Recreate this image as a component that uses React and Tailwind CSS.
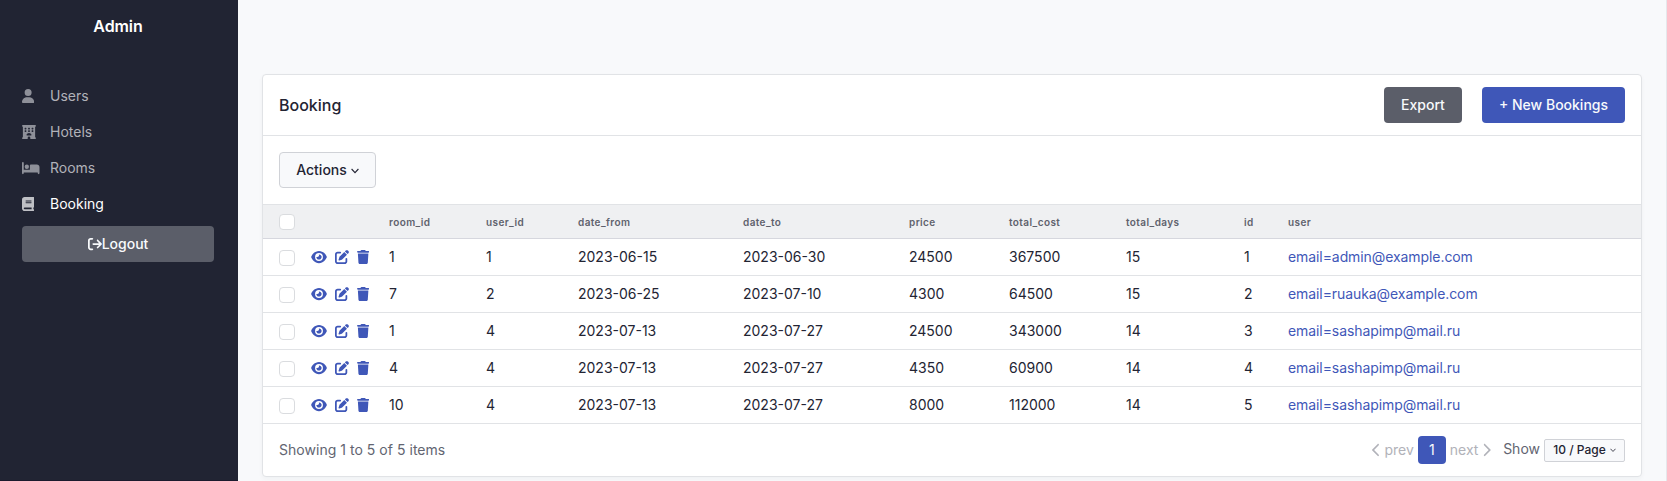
import React from "react";
import {
  FaUser,
  FaHotel,
  FaBed,
  FaBook,
  FaArrowRightFromBracket,
  FaEye,
  FaPenToSquare,
  FaTrash,
  FaChevronLeft,
  FaChevronRight,
} from "react-icons/fa6";

const menu = [
  { label: "Users", Icon: FaUser, size: "w-[12.25px]" },
  { label: "Hotels", Icon: FaHotel, size: "w-[14px]" },
  { label: "Rooms", Icon: FaBed, size: "w-[17.5px]" },
  { label: "Booking", Icon: FaBook, size: "w-[12.25px]", active: true },
];

const columns = ["room_id", "user_id", "date_from", "date_to", "price", "total_cost", "total_days", "id", "user"];

const rows = [
  ["1", "1", "2023-06-15", "2023-06-30", "24500", "367500", "15", "1", "email=admin@example.com"],
  ["7", "2", "2023-06-25", "2023-07-10", "4300", "64500", "15", "2", "email=ruauka@example.com"],
  ["1", "4", "2023-07-13", "2023-07-27", "24500", "343000", "14", "3", "email=sashapimp@mail.ru"],
  ["4", "4", "2023-07-13", "2023-07-27", "4350", "60900", "14", "4", "email=sashapimp@mail.ru"],
  ["10", "4", "2023-07-13", "2023-07-27", "8000", "112000", "14", "5", "email=sashapimp@mail.ru"],
];

function Sidebar() {
  return (
    <aside className="flex w-[238px] shrink-0 flex-col border-b border-[#1c1b2e] bg-[#212433] pr-6 pl-[22px]">
      <h1 className="mt-[14px] text-center text-base leading-6 font-semibold tracking-[-0.1px] text-white">Admin</h1>
      <nav className="mt-[40px] flex flex-col">
        {menu.map(({ label, Icon, size, active }) => (
          <a key={label} className={`flex h-9 items-center text-sm ${active ? "text-white" : "text-[#b1b2b9]"}`}>
            <span className={`flex w-7 items-center ${active ? "text-[#bfc0c5]" : "text-[#8e9099]"}`}>
              <Icon className={`h-[14px] ${size}`} />
            </span>
            <span>{label}</span>
          </a>
        ))}
      </nav>
      <button className="mt-1 flex h-9 w-48 items-center justify-center rounded bg-[#5b5e69] text-sm font-medium text-[#f8fafc]">
        <FaArrowRightFromBracket className="size-[14px]" />
        Logout
      </button>
    </aside>
  );
}

function Checkbox() {
  return <span className="block size-4 rounded border border-[#dadcdf] bg-white" />;
}

function Caret({ className }) {
  return (
    <svg className={className} viewBox="0 0 8 6" fill="none" stroke="currentColor" strokeWidth="1.1">
      <path d="M0.6 1L4 4.6L7.4 1" />
    </svg>
  );
}

function BookingTable() {
  return (
    <table className="w-full table-fixed border-separate border-spacing-0 text-left text-sm text-[#232433]">
      <colgroup>
        <col className="w-[40px]" />
        <col className="w-[78px]" />
        <col className="w-[97px]" />
        <col className="w-[92px]" />
        <col className="w-[165px]" />
        <col className="w-[166px]" />
        <col className="w-[100px]" />
        <col className="w-[117px]" />
        <col className="w-[118px]" />
        <col className="w-[44px]" />
        <col />
      </colgroup>
      <thead>
        <tr className="h-[35px] text-[10px] leading-4 tracking-[0.4px] text-[#5f626d]">
          <th className="border-y border-t-[#e1e3e6] border-b-[#d6d7de] bg-[#eff0f2] py-0 pr-2 pl-4"><Checkbox /></th>
          <th className="border-y border-t-[#e1e3e6] border-b-[#d6d7de] bg-[#eff0f2]" />
          {columns.map((c) => (
            <th key={c} className="border-y border-t-[#e1e3e6] border-b-[#d6d7de] bg-[#eff0f2] px-2 py-0 font-semibold">{c}</th>
          ))}
        </tr>
      </thead>
      <tbody>
        {rows.map((row, i) => (
          <tr key={i} className="h-[37px]">
            <td className="border-b border-[#e1e3e6] pt-[2px] pr-2 pl-4"><Checkbox /></td>
            <td className="border-b border-[#e1e3e6] px-2 py-0">
              <div className="flex items-center text-[#3f57b8]">
                <FaEye className="h-[14px] w-4" />
                <FaPenToSquare className="ml-[7.5px] size-[14px]" />
                <FaTrash className="ml-2 h-[14px] w-[12.25px]" />
              </div>
            </td>
            {row.map((v, j) => (
              <td key={j} className={`border-b border-[#e1e3e6] px-2 py-0 ${j === 8 ? "tracking-[-0.08px] text-[#3f57b8]" : ""}`}>{v}</td>
            ))}
          </tr>
        ))}
      </tbody>
    </table>
  );
}

export default function App() {
  return (
    <div className="flex h-[481px] w-full overflow-hidden bg-[#f8f9fb] font-['Inter',sans-serif] text-[#232433]">
      <Sidebar />
      <main className="flex-1 border-r border-[#e6e7eb] pt-[74px] pr-6 pl-6">
        <section className="rounded border border-[#e1e3e6] bg-white shadow-[0_2px_4px_rgba(35,46,60,0.04)]">
          <header className="flex h-[61px] items-center border-b border-[#e1e3e6] px-4">
            <h2 className="flex-1 text-base leading-6 font-medium">Booking</h2>
            <button className="h-9 w-[78px] rounded bg-[#5b5e69] text-sm font-medium text-[#f8fafc]">Export</button>
            <button className="ml-5 h-9 w-[143px] rounded bg-[#3f57b8] text-sm font-medium text-[#f8fafc]">+ New Bookings</button>
          </header>
          <div className="flex h-[68px] items-center px-4">
            <button className="flex h-9 w-[97px] items-center justify-center rounded border border-[#d0d2d7] bg-[#f8f9fb] text-sm font-medium">
              Actions
              <Caret className="mt-0.5 ml-1 h-1.5 w-2" />
            </button>
          </div>
          <BookingTable />
          <footer className="flex h-[52px] items-center px-4 text-sm text-[#626571]">
            <p className="flex-1 tracking-[0.03px]">Showing 1 to 5 of 5 items</p>
            <div className="flex items-center text-[#b1b2b9]">
              <FaChevronLeft className="mr-1 h-[14px] w-[8.75px]" />
              <span>prev</span>
              <span className="mx-1 flex size-7 items-center justify-center rounded bg-[#3f57b8] text-[#f8fafc]">1</span>
              <span>next</span>
              <FaChevronRight className="ml-1 h-[14px] w-[8.75px]" />
            </div>
            <span className="mb-0.5 ml-3">Show</span>
            <button className="ml-1 flex h-[23px] w-[81px] items-center justify-center rounded-xs border border-[#d0d2d7] bg-[#f8f9fb] text-xs font-medium text-[#232433]">
              10 / Page
              <Caret className="mt-px ml-1 h-[4.5px] w-1.5" />
            </button>
          </footer>
        </section>
      </main>
    </div>
  );
}
